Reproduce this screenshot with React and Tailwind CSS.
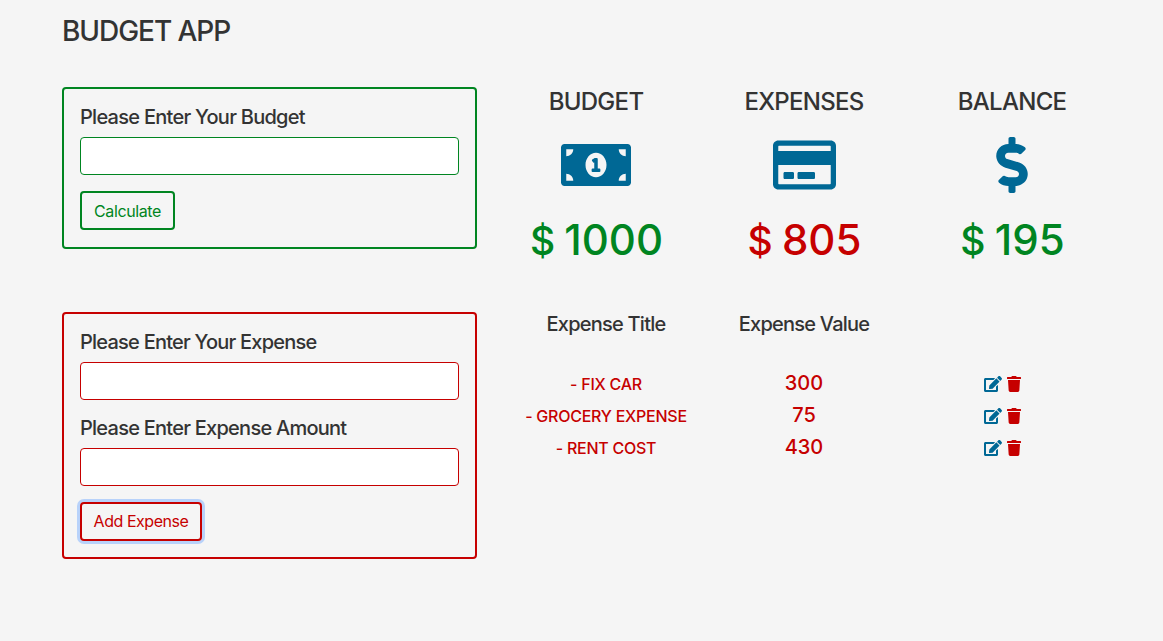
import { FaMoneyBillAlt, FaRegCreditCard, FaDollarSign, FaEdit, FaTrash } from "react-icons/fa";

const expenses = [
  { title: "fix car", value: 300 },
  { title: "grocery expense", value: 75 },
  { title: "rent cost", value: 430 },
];

function BudgetForm() {
  return (
    <form className="h-[162px] rounded border-2 border-[#008521] p-4">
      <label htmlFor="budget" className="block h-8 text-xl leading-6 font-medium tracking-[-0.73px]">
        Please Enter Your Budget
      </label>
      <input id="budget" className="block h-[38px] w-full rounded border border-[#008521] bg-white px-3 outline-none" />
      <button type="button" className="mt-4 block h-[39px] w-[95px] rounded border-2 border-[#008521] text-[#008521]">
        <span className="tracking-[-0.38px]">Calculate</span>
      </button>
    </form>
  );
}

function ExpenseForm() {
  return (
    <form className="h-[247px] rounded border-2 border-[#c60000] p-4">
      <label htmlFor="expense" className="block h-8 text-xl leading-6 font-medium tracking-[-0.77px]">
        Please Enter Your Expense
      </label>
      <input id="expense" className="block h-[38px] w-full rounded border border-[#c60000] bg-white px-3 outline-none" />
      <label htmlFor="amount" className="mt-4 block h-8 text-xl leading-6 font-medium tracking-[-0.75px]">
        Please Enter Expense Amount
      </label>
      <input id="amount" className="block h-[38px] w-full rounded border border-[#c60000] bg-white px-3 outline-none" />
      <button type="button" className="mt-4 block h-[39px] w-[122px] rounded border-2 border-[#c60000] pb-0.5 text-[#c60000] ring-3 ring-[#b8d2fa]">
        <span className="tracking-[-0.45px]">Add Expense</span>
      </button>
    </form>
  );
}

function Stat({ title, icon, amount, color }) {
  return (
    <div className="flex flex-col items-center">
      <h2 className="text-2xl leading-[29px] font-medium tracking-[-0.7px] uppercase">{title}</h2>
      <div className="mt-[21px] text-[56px] text-[#006895]">{icon}</div>
      <div className={`mt-[21px] pl-px text-[42px] leading-[52px] font-medium whitespace-nowrap [word-spacing:-2px] ${color}`}>
        <span className="text-[39px] leading-none">$</span> {amount}
      </div>
    </div>
  );
}

export default function App() {
  return (
    <main className="h-[641px] bg-[#f5f5f5] pt-4 pl-[62px] font-['Inter',sans-serif] text-base text-[#333333]">
      <h1 className="h-[71px] text-[28px] leading-[31px] font-medium tracking-[-1.05px] uppercase">Budget App</h1>
      <div className="flex h-[225px]">
        <div className="w-[415px]">
          <BudgetForm />
        </div>
        <div className="ml-[15px] grid w-[624px] grid-cols-3">
          <Stat title="Budget" icon={<FaMoneyBillAlt className="h-14 w-[70px]" />} amount="1000" color="text-[#008521]" />
          <Stat title="Expenses" icon={<FaRegCreditCard className="h-14 w-[63px]" />} amount="805" color="text-[#c60000]" />
          <Stat title="Balance" icon={<FaDollarSign className="h-14 w-8" />} amount="195" color="text-[#008521]" />
        </div>
      </div>
      <div className="flex">
        <div className="w-[415px]">
          <ExpenseForm />
        </div>
        <div className="ml-[30px] w-[594px]">
          <div className="grid grid-cols-3 text-center text-xl leading-6 font-medium tracking-[-0.77px]">
            <h3>Expense Title</h3>
            <h3>Expense Value</h3>
          </div>
          <ul className="mt-8">
            {expenses.map((e) => (
              <li key={e.title} className="grid h-8 grid-cols-3 items-center text-center font-medium text-[#c60000]">
                <span className="tracking-[-0.25px] whitespace-nowrap uppercase">- {e.title}</span>
                <span className="pb-0.5 text-xl">{e.value}</span>
                <span className="flex justify-center gap-[4.5px] pl-[0.5px]">
                  <FaEdit className="h-4 w-[18px] text-[#006895]" />
                  <FaTrash className="h-4 w-3.5" />
                </span>
              </li>
            ))}
          </ul>
        </div>
      </div>
    </main>
  );
}
